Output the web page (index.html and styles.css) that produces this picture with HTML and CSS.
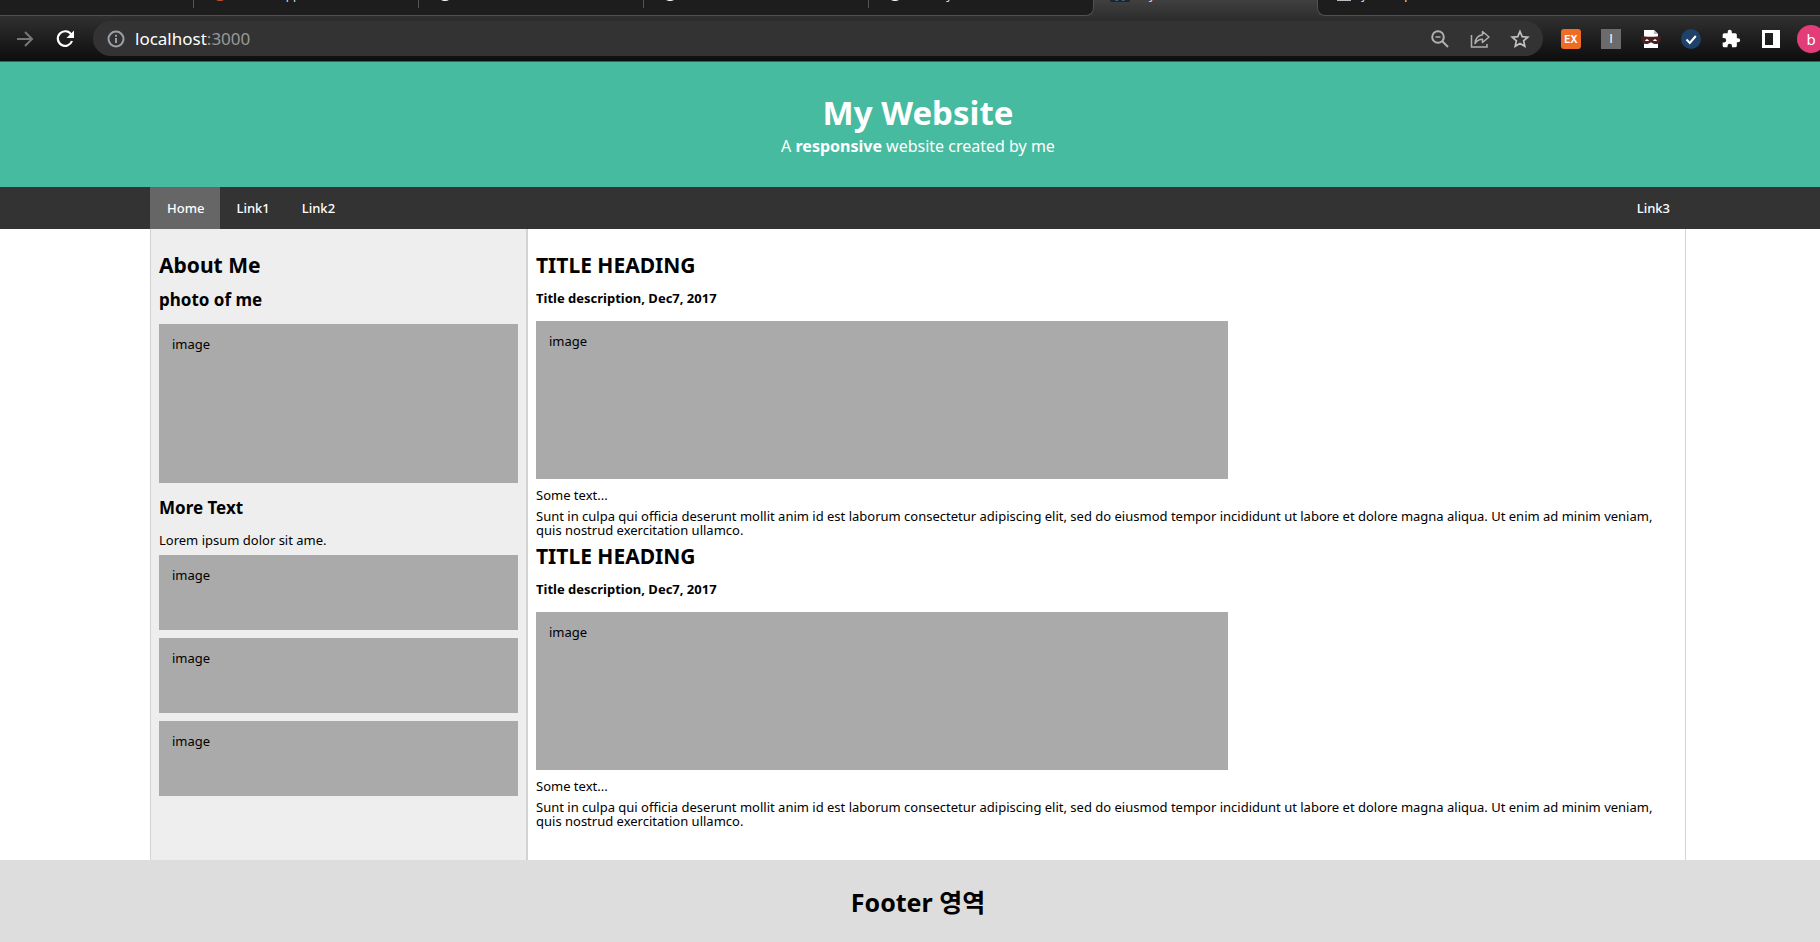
FILE: index.html
```html
<!DOCTYPE html>
<html lang="ko">
<head>
<meta charset="utf-8">
<title>My Website</title>
<link rel="stylesheet" href="styles.css">
</head>
<body>
<div class="window">
  <div class="tabs">
    <div class="tab tab-lead"></div>
    <div class="tab"><svg class="fav" viewBox="0 0 20 20"><circle cx="10" cy="10" r="8" fill="#d4522f"/></svg><span class="tab-title">Create App</span></div>
    <div class="tab"><svg class="fav" viewBox="0 0 20 20"><circle cx="10" cy="10" r="8" fill="#fff"/><path d="M7 13h6v3H7z" fill="#777"/></svg></div>
    <div class="tab"><svg class="fav" viewBox="0 0 20 20"><circle cx="10" cy="10" r="8" fill="#fff"/><path d="M7 13h6v3H7z" fill="#777"/></svg></div>
    <div class="tab tab-prev"><svg class="fav" viewBox="0 0 20 20"><circle cx="10" cy="10" r="8" fill="#fff"/><path d="M7 13h6v3H7z" fill="#777"/></svg><span class="tab-title">Library</span></div>
    <div class="tab tab-active"><svg class="fav" viewBox="0 0 20 20"><rect y="-1" width="20" height="20" rx="2" fill="#20232a"/><path d="M4 14c2 4 4 3 6 0 2 3 4 4 6 0" fill="none" stroke="#4d9cb5" stroke-width="2"/></svg><span class="tab-title">My Website</span></div>
    <div class="tab tab-next"><svg class="fav" viewBox="0 0 20 20"><path d="M4 2h12v15H4z" fill="#222" stroke="#b8bcc4" stroke-width="2"/></svg><span class="tab-title">javascript</span></div>
    <div class="tab tab-rest"><svg class="plus" viewBox="0 0 20 20"><path d="M10 3v14" stroke="#ccc" stroke-width="2"/></svg></div>
  </div>
  <div class="toolbar">
    <button class="nav-btn" aria-label="Forward"><svg width="20" height="20" viewBox="0 0 20 20" fill="none" stroke="#777" stroke-width="2"><path d="M2 10h15M10 3l7 7-7 7"/></svg></button>
    <button class="nav-btn" aria-label="Reload"><svg width="20" height="20" viewBox="0 0 20 20"><path d="M16.2 5.500A7.300 7.300 0 1 0 17 12" fill="none" stroke="#fff" stroke-width="2.200"/><path d="M19 1.500v7.500h-7.500z" fill="#fff"/></svg></button>
    <div class="omnibox">
      <svg width="18" height="18" viewBox="0 0 18 18" fill="none" stroke="#9aa0a6" stroke-width="2"><circle cx="9" cy="9" r="7.500"/><path d="M9 8v5M9 4.800v2"/></svg>
      <div class="url" role="textbox" aria-label="Address" contenteditable="true" spellcheck="false">localhost<span class="port">:3000</span></div>
      <button class="icon-btn" aria-label="Zoom"><svg width="20" height="20" viewBox="0 0 20 20" fill="none" stroke="#b0b0b0" stroke-width="2"><circle cx="8" cy="8" r="5.800"/><path d="M12.300 12.300l5.700 5.700"/><path d="M5.500 8h5" stroke-width="1.500"/></svg></button>
      <button class="icon-btn" aria-label="Share"><svg width="20" height="20" viewBox="0 0 20 20" fill="none" stroke="#b0b0b0" stroke-width="1.500"><path d="M1.500 6v12h15.500v-3"/><path d="M12.500 2.500l6.500 5.500-6.500 5.500v-3.300c-3.500 0-5.500 1-7.500 4.300.4-5 3.500-8 7.500-8.700z" stroke-linejoin="round"/></svg></button>
      <button class="icon-btn" aria-label="Bookmark"><svg width="20" height="20" viewBox="0 0 20 20" fill="none" stroke="#c0c0c0" stroke-width="1.700"><path d="M10 2.500l2.200 5.100 5.600.5-4.200 3.700 1.200 5.500L10 14.400l-4.800 2.900 1.200-5.500-4.200-3.700 5.600-.5z"/></svg></button>
    </div>
    <div class="extensions">
      <button class="icon-btn" aria-label="EX extension"><span class="ex">EX</span></button>
      <button class="icon-btn" aria-label="I extension"><span class="eye">I</span></button>
      <button class="icon-btn" aria-label="Mask extension"><svg width="20" height="20" viewBox="0 0 20 20"><path d="M3 1h10l4 4v14H3z" fill="#fff"/><path d="M13 1v4h4z" fill="#bbb"/><path d="M0 7c4 1 16 1 20 0l-.5 3c0 4-1.500 5-4.500 5-2 0-3.500-.8-5-1.800C8.500 14.200 7 15 5 15c-3 0-4.500-2-4.500-5z" fill="#4b2020"/><path d="M4 12c1-2.200 3-2.200 4 0zM12 12c1-2.200 3-2.200 4 0z" fill="#fff"/></svg></button>
      <button class="icon-btn" aria-label="Check extension"><svg width="20" height="20" viewBox="0 0 20 20"><circle cx="10" cy="10" r="10" fill="#1e4269"/><path d="M5.500 10.500l3.300 3.500 6-7" fill="none" stroke="#fff" stroke-width="2"/></svg></button>
      <button class="icon-btn" aria-label="Extensions"><svg width="20" height="20" viewBox="0 0 24 24"><path d="M20.500 11H19V7a2 2 0 0 0-2-2h-4V3.500a2.500 2.500 0 0 0-5 0V5H4a2 2 0 0 0-2 2v3.800h1.500a2.700 2.700 0 0 1 0 5.400H2V20a2 2 0 0 0 2 2h3.800v-1.500a2.700 2.700 0 0 1 5.400 0V22H17a2 2 0 0 0 2-2v-4h1.500a2.500 2.500 0 0 0 0-5z" fill="#fff"/></svg></button>
      <button class="icon-btn" aria-label="Side panel"><svg width="20" height="20" viewBox="0 0 20 20"><path d="M1 1h18v18H1zM4 4v12h8V4z" fill="#fff" fill-rule="evenodd"/></svg></button>
      <button class="icon-btn" aria-label="Profile"><span class="avatar">b</span></button>
    </div>
  </div>

  <header class="hero">
    <h1>My Website</h1>
    <p>A <strong>responsive</strong> website created by me</p>
  </header>
  <nav class="menu">
    <div class="menu-inner">
      <a class="current" href="#home">Home</a>
      <a href="#link1">Link1</a>
      <a href="#link2">Link2</a>
      <a class="last" href="#link3">Link3</a>
    </div>
  </nav>
  <div class="content">
    <aside class="side">
      <h2>About Me</h2>
      <h3>photo of me</h3>
      <div class="image photo">image</div>
      <h3 class="more">More Text</h3>
      <p>Lorem ipsum dolor sit ame.</p>
      <div class="image thumb">image</div>
      <div class="image thumb">image</div>
      <div class="image thumb">image</div>
    </aside>
    <main class="main">
      <article>
        <h2>TITLE HEADING</h2>
        <h4>Title description, Dec7, 2017</h4>
        <div class="image wide">image</div>
        <p class="lead">Some text...</p>
        <p>Sunt in culpa qui officia deserunt mollit anim id est laborum consectetur adipiscing elit, sed do eiusmod tempor incididunt ut labore et dolore magna aliqua. Ut enim ad minim veniam, quis nostrud exercitation ullamco.</p>
      </article>
      <article>
        <h2>TITLE HEADING</h2>
        <h4>Title description, Dec7, 2017</h4>
        <div class="image wide">image</div>
        <p class="lead">Some text...</p>
        <p>Sunt in culpa qui officia deserunt mollit anim id est laborum consectetur adipiscing elit, sed do eiusmod tempor incididunt ut labore et dolore magna aliqua. Ut enim ad minim veniam, quis nostrud exercitation ullamco.</p>
      </article>
    </main>
  </div>
  <footer class="footer"><h2>Footer 영역</h2></footer>
</div>
</body>
</html>
```
FILE: styles.css
```css
* { box-sizing: border-box; }
html { overflow: hidden; }
body {
  margin: 0;
  overflow: hidden;
  background: #fff;
  color: #000;
  font-family: "Noto Sans", "Noto Sans CJK KR", sans-serif;
  font-size: 13px;
  line-height: 14px;
}
h1, h2, h3, h4, p { margin: 0; }
button { border: 0; padding: 0; background: none; font: inherit; color: inherit; }

/* The window runs slightly past the right edge of the screen */
.window {
  width: calc(100% + 16px);
  min-height: 100vh;
  display: flex;
  flex-direction: column;
}

/* Tab strip */
.tabs { display: flex; height: 16px; overflow: hidden; background: #333; }
.tab {
  flex: 0 0 225px;
  display: flex;
  align-items: flex-end;
  gap: 8px;
  height: 16px;
  padding: 0 16px 12px;
  background: linear-gradient(#555, #555) right top / 1px 8px no-repeat #1d1d1d;
  border-bottom: 1px solid #515151;
  color: #ddd;
  font-size: 12px;
}
.tab-lead { flex-basis: 194px; }
.tab-prev { border-right: 1px solid #515151; border-bottom-right-radius: 8px; background: #1d1d1d; }
.tab-active { flex-basis: 223px; background: linear-gradient(#404040, #303030); border-bottom: 0; padding-bottom: 13px; }
.tab-next { border-left: 1px solid #515151; border-bottom-left-radius: 8px; background: #1d1d1d; }
.tab-rest { flex: 1; background: #1d1d1d; padding-bottom: 14px; }
.fav, .plus { flex: none; width: 20px; height: 20px; }
.tab-title { line-height: 16px; }

/* Toolbar */
.toolbar {
  display: flex;
  align-items: center;
  height: 46px;
  padding: 0 5px;
  background: linear-gradient(#303030, #0d0d0d);
  border-bottom: 1px solid #555;
}
.nav-btn { display: grid; place-items: center; width: 40px; height: 34px; }
.omnibox {
  flex: 1;
  display: flex;
  align-items: center;
  height: 35px;
  margin: 0 8px;
  padding: 0 3px 0 14px;
  border-radius: 18px;
  background: #333;
}
.url { flex: 1; margin-left: 10px; color: #fff; font-size: 17px; line-height: 24px; }
.port { color: #999; }
.extensions { display: flex; }
.icon-btn { display: grid; place-items: center; width: 40px; height: 34px; }
.ex, .eye {
  display: grid;
  place-items: center;
  width: 20px;
  height: 20px;
  color: #fff;
}
.ex { border-radius: 3px; background: #ee6c24; font-family: Inter, sans-serif; font-size: 10px; font-weight: 700; }
.eye { background: #6b6b6b; font-family: "Liberation Sans", sans-serif; }
.avatar {
  display: grid;
  place-items: center;
  width: 28px;
  height: 28px;
  border-radius: 50%;
  background: #e23d78;
  color: #fff;
  font-size: 15px;
}

/* Page header */
.hero { padding: 30px 0 29px; background: #47bb9f; color: #fff; text-align: center; }
.hero h1 { font-size: 33px; line-height: 42px; }
.hero p { font-size: 16px; line-height: 24px; }

/* Menu */
.menu { background: #333; padding: 0 150px; }
.menu-inner { display: flex; }
.menu a {
  padding: 0 16px;
  color: #fff;
  font-weight: 500;
  line-height: 42px;
  text-decoration: none;
}
.menu .current { padding-left: 17px; background: #666; }
.menu .last { margin-left: auto; }

/* Two columns */
.content { display: grid; grid-template-columns: 377fr 1159fr; margin: 0 150px; }
.side, .main { padding: 24px 8px 32px; border: 1px solid #d3d3d3; border-width: 0 1px; }
.side { background: #eee; }
h2 { font-size: 21px; line-height: 24px; }
h3 { margin-top: 13px; font-size: 17px; line-height: 20px; }
h4 { margin-top: 13px; font-size: 13px; line-height: 16px; }
.image { padding: 13px; background: #aaa; }
.photo { height: 159px; margin-top: 14px; }
.side .more { margin: 15px 0; }
.thumb { height: 75px; margin-top: 8px; }
.wide { width: calc(60% + 7px); height: 158px; margin: 15px 0 9px; }
.lead { margin-bottom: 7px; }
article + article { margin-top: 7px; }

.footer { flex: 1; padding: 26px 0 24px; background: #ddd; text-align: center; }
.footer h2 { font-size: 25px; line-height: 32px; }
```
